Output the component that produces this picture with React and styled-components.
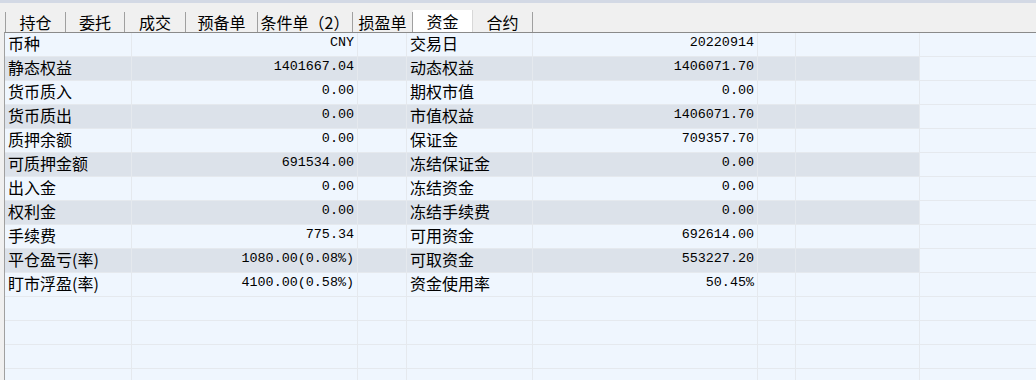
import React from "react"
import styled, { createGlobalStyle } from "styled-components"

const GlobalStyle = createGlobalStyle`
  html, body {
    margin: 0;
    padding: 0;
    background: #f0f0f0;
  }
  body {
    font-family: "Noto Sans CJK SC", "Noto Sans", sans-serif;
    color: #000;
  }
`

const COLS = "127px 226px 49px 126px 225px 38px 124px 1fr"

const Page = styled.div`
  width: 1036px;
  height: 380px;
  overflow: hidden;
  background: #f0f0f0;
  display: flex;
  flex-direction: column;
`

const TopStrip = styled.div`
  height: 3px;
  background: #d3d9e5;
  flex-shrink: 0;
`

const TabBar = styled.div`
  display: flex;
  align-items: flex-end;
  height: 22px;
  margin-top: 7px;
  padding-left: 5px;
  flex-shrink: 0;
`

const Tab = styled.div`
  width: ${p => p.w}px;
  height: ${p => (p.active ? 22 : 20)}px;
  box-sizing: border-box;
  display: flex;
  align-items: center;
  justify-content: center;
  font-size: 16px;
  line-height: 20px;
  background: ${p => (p.active ? "#ffffff" : "transparent")};
  border-right: 1px solid ${p => (p.active ? "#d8d8d8" : "#a0a0a0")};
  border-left: ${p => (p.first ? "1px solid #a0a0a0" : "none")};
  white-space: nowrap;
`

const Grid = styled.div`
  flex: 1;
  margin-left: 4px;
  border-top: 1px solid #8a8a8a;
  border-left: 1px solid #a0a0a0;
  background: #eff6fe;
  overflow: hidden;
`

const Row = styled.div`
  display: grid;
  grid-template-columns: ${COLS};
  height: 24px;
`

const Cell = styled.div`
  box-sizing: border-box;
  height: 24px;
  border-right: 1px solid #e5e9ee;
  border-bottom: 1px solid #e5e9ee;
  background: ${p => (p.stripe ? "#dce2ea" : "#eff6fe")};
  display: flex;
  align-items: center;
  padding: 0 3px 3px;
  line-height: 20px;
  white-space: nowrap;
`

const Label = styled(Cell)`
  font-size: 16px;
`

const Value = styled(Cell)`
  justify-content: flex-end;
  font-family: "Liberation Mono", "DejaVu Sans Mono", monospace;
  font-size: 13.4px;
`

const Filler = styled(Cell)`
  background: #eff6fe;
  border-right: none;
`

const tabs = [
  { t: "持仓", w: 61 },
  { t: "委托", w: 59 },
  { t: "成交", w: 61 },
  { t: "预备单", w: 72 },
  { t: "条件单（2）", w: 95 },
  { t: "损盈单", w: 60 },
  { t: "资金", w: 60, active: true },
  { t: "合约", w: 60 },
]

const rows = [
  ["币种", "CNY", "交易日", "20220914"],
  ["静态权益", "1401667.04", "动态权益", "1406071.70"],
  ["货币质入", "0.00", "期权市值", "0.00"],
  ["货币质出", "0.00", "市值权益", "1406071.70"],
  ["质押余额", "0.00", "保证金", "709357.70"],
  ["可质押金额", "691534.00", "冻结保证金", "0.00"],
  ["出入金", "0.00", "冻结资金", "0.00"],
  ["权利金", "0.00", "冻结手续费", "0.00"],
  ["手续费", "775.34", "可用资金", "692614.00"],
  ["平仓盈亏(率)", "1080.00(0.08%)", "可取资金", "553227.20"],
  ["盯市浮盈(率)", "4100.00(0.58%)", "资金使用率", "50.45%"],
  ["", "", "", ""],
  ["", "", "", ""],
  ["", "", "", ""],
  ["", "", "", ""],
]

export default function App() {
  return (
    <Page>
      <GlobalStyle />
      <TopStrip />
      <TabBar>
        {tabs.map((tab, i) => (
          <Tab key={i} w={tab.w} active={tab.active} first={i === 0}>
            {tab.t}
          </Tab>
        ))}
      </TabBar>
      <Grid>
        {rows.map((r, i) => {
          const stripe = i % 2 === 1 && i < 11
          return (
            <Row key={i}>
              <Label stripe={stripe}>{r[0]}</Label>
              <Value stripe={stripe}>{r[1]}</Value>
              <Cell stripe={stripe} />
              <Label stripe={stripe}>{r[2]}</Label>
              <Value stripe={stripe}>{r[3]}</Value>
              <Cell stripe={stripe} />
              <Cell stripe={stripe} />
              <Filler />
            </Row>
          )
        })}
      </Grid>
    </Page>
  )
}
